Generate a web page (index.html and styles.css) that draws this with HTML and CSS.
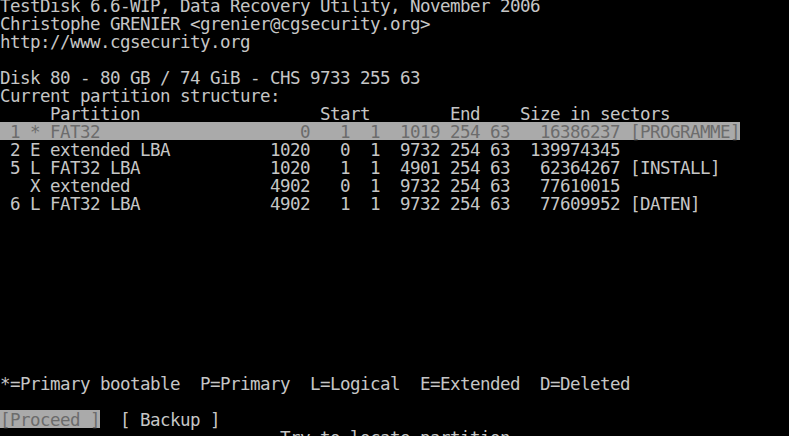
FILE: index.html
```html
<!DOCTYPE html>
<html lang="en">
<head>
    <meta charset="UTF-8">
    <title>TestDisk</title>
    <link rel="stylesheet" href="styles.css">
</head>
<body>
    <div class="term">
        <div class="line">TestDisk 6.6-WIP, Data Recovery Utility, November 2006</div>
        <div class="line">Christophe GRENIER &lt;grenier@cgsecurity.org&gt;</div>
        <div class="line">http://www.cgsecurity.org</div>
        <div class="line"></div>
        <div class="line">Disk 80 - 80 GB / 74 GiB - CHS 9733 255 63</div>
        <div class="line">Current partition structure:</div>
        <div class="line">     Partition                  Start        End    Size in sectors</div>
        <div class="line"><span class="sel"> 1 * FAT32                    0   1  1  1019 254 63   16386237 [PROGRAMME]</span></div>
        <div class="line"> 2 E extended LBA          1020   0  1  9732 254 63  139974345</div>
        <div class="line"> 5 L FAT32 LBA             1020   1  1  4901 254 63   62364267 [INSTALL]</div>
        <div class="line">   X extended              4902   0  1  9732 254 63   77610015</div>
        <div class="line"> 6 L FAT32 LBA             4902   1  1  9732 254 63   77609952 [DATEN]</div>
        <div class="line"></div>
        <div class="line"></div>
        <div class="line"></div>
        <div class="line"></div>
        <div class="line"></div>
        <div class="line"></div>
        <div class="line"></div>
        <div class="line"></div>
        <div class="line"></div>
        <div class="line">*=Primary bootable  P=Primary  L=Logical  E=Extended  D=Deleted</div>
        <div class="line"></div>
        <div class="line"><span class="sel">[Proceed ]</span>  [ Backup ]</div>
        <div class="line">                            Try to locate partition</div>
    </div>
</body>
</html>
```

FILE: styles.css
```css
html, body { margin: 0; padding: 0; background: #000; overflow: hidden; }
.term { margin-top: -4px; color: #c6c6c6; font-family: "DejaVu Sans Mono", monospace; font-size: 17.5px; letter-spacing: -0.536px; }
.line { height: 18px; line-height: 20px; white-space: pre; }
.sel { display: inline-block; height: 18px; line-height: 20px; vertical-align: top; background-color: #aaaaaa; color: #6c6c6c; }
```
